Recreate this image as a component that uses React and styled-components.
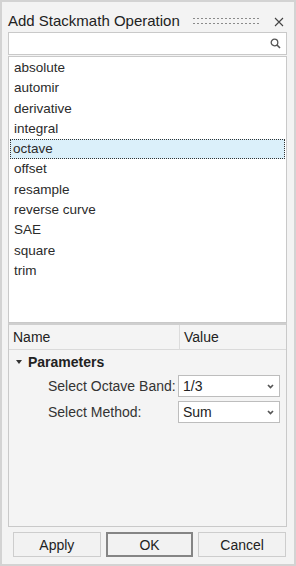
import React from "react";
import styled, { createGlobalStyle } from "styled-components";

const GlobalStyle = createGlobalStyle`
  html, body {
    margin: 0;
    padding: 0;
    background: #f3f3f3;
  }
  * {
    box-sizing: border-box;
  }
`;

const operations = [
  "absolute",
  "automir",
  "derivative",
  "integral",
  "octave",
  "offset",
  "resample",
  "reverse curve",
  "SAE",
  "square",
  "trim",
];

const params = [
  { label: "Select Octave Band:", value: "1/3" },
  { label: "Select Method:", value: "Sum" },
];

const SearchIcon = () => (
  <svg width="11" height="11" viewBox="0 0 11 11">
    <circle cx="4.5" cy="4.5" r="3.3" fill="none" stroke="#555" strokeWidth="1.3" />
    <line x1="7" y1="7" x2="10" y2="10" stroke="#555" strokeWidth="1.6" />
  </svg>
);

const CloseIcon = () => (
  <svg width="10" height="10" viewBox="0 0 10 10">
    <path d="M1 1 L9 9 M9 1 L1 9" stroke="#444" strokeWidth="1.1" />
  </svg>
);

const Chevron = () => (
  <svg width="7" height="5" viewBox="0 0 7 5">
    <path d="M1 1 L3.5 3.5 L6 1" fill="none" stroke="#555" strokeWidth="1.7" />
  </svg>
);

const Caret = () => (
  <svg width="6" height="4" viewBox="0 0 6 4">
    <path d="M0 0 L6 0 L3 4 Z" fill="#333" />
  </svg>
);

const App = () => {
  const selected = "octave";
  return (
    <>
      <GlobalStyle />
      <Window>
        <TitleBar>
          <Title>Add Stackmath Operation</Title>
          <Grip />
          <CloseButton>
            <CloseIcon />
          </CloseButton>
        </TitleBar>

        <SearchBox>
          <SearchIcon />
        </SearchBox>

        <OpList>
          {operations.map((op) => (
            <OpItem key={op} $active={op === selected}>
              {op}
            </OpItem>
          ))}
        </OpList>

        <Tree>
          <TreeHeader>
            <HeadCell>Name</HeadCell>
            <HeadCell $divider>Value</HeadCell>
          </TreeHeader>
          <GroupRow>
            <Caret />
            <span>Parameters</span>
          </GroupRow>
          {params.map((p) => (
            <ParamRow key={p.label}>
              <ParamLabel>{p.label}</ParamLabel>
              <Select>
                <span>{p.value}</span>
                <Chevron />
              </Select>
            </ParamRow>
          ))}
        </Tree>

        <Buttons>
          <Button>Apply</Button>
          <Button $default>OK</Button>
          <Button>Cancel</Button>
        </Buttons>
      </Window>
    </>
  );
};

const Window = styled.div`
  width: 296px;
  height: 566px;
  border: 2px solid #d3d3d3;
  background: #f3f3f3;
  padding: 0 7px 0 6px;
  display: flex;
  flex-direction: column;
  font-family: "Liberation Sans", Arial, sans-serif;
  color: #2b2b2b;
`;

const TitleBar = styled.div`
  height: 30px;
  padding-top: 9px;
  display: flex;
  align-items: flex-start;
`;

const Title = styled.div`
  font-size: 15px;
  line-height: 20px;
  color: #222;
  white-space: nowrap;
`;

const Grip = styled.div`
  width: 66px;
  height: 9px;
  margin: 6px 0 0 13px;
  background-image: radial-gradient(circle, #8a8a8a 0.75px, transparent 1.1px);
  background-size: 4px 5px;
  background-position: -1px -1px;
`;

const CloseButton = styled.div`
  margin: 6px 0 0 auto;
  padding-right: 3px;
  display: flex;
`;

const SearchBox = styled.div`
  height: 23px;
  margin-bottom: 1px;
  border: 1px solid #c9c9c9;
  background: #fff;
  display: flex;
  align-items: center;
  justify-content: flex-end;
  padding-right: 5px;
`;

const OpList = styled.div`
  height: 267px;
  border: 1px solid #c9c9c9;
  background: #fff;
  padding: 1px 1px 0 1px;
`;

const OpItem = styled.div`
  height: 20.3px;
  line-height: 18.3px;
  font-size: 13.5px;
  padding-left: ${({ $active }) => ($active ? "2px" : "3px")};
  background: ${({ $active }) => ($active ? "#dbf0fa" : "transparent")};
  border: ${({ $active }) => ($active ? "1px dotted #333" : "1px solid transparent")};
`;

const Tree = styled.div`
  height: 204px;
  border: 1px solid #c9c9c9;
  border-top: 2px solid #cfcfcf;
  background: #f4f4f4;
`;

const TreeHeader = styled.div`
  height: 25px;
  display: grid;
  grid-template-columns: 170px 1fr;
  border-bottom: 1px solid #dadada;
`;

const HeadCell = styled.div`
  font-size: 14px;
  line-height: 25px;
  padding-left: 4px;
  color: #222;
  border-left: ${({ $divider }) => ($divider ? "1px solid #dcdcdc" : "none")};
`;

const GroupRow = styled.div`
  height: 23px;
  display: flex;
  align-items: center;
  gap: 6px;
  padding-left: 7px;
  font-size: 14px;
  font-weight: bold;
  color: #222;
`;

const ParamRow = styled.div`
  height: 26px;
  display: grid;
  grid-template-columns: 169px 102px;
  align-items: center;
`;

const ParamLabel = styled.div`
  font-size: 14px;
  padding-left: 39px;
  color: #333;
  white-space: nowrap;
`;

const Select = styled.div`
  height: 22px;
  border: 1px solid #bdbdbd;
  background: #fff;
  display: flex;
  align-items: center;
  justify-content: space-between;
  padding: 0 5px 0 4px;
  font-size: 14px;
  color: #222;
`;

const Buttons = styled.div`
  margin-top: 5px;
  height: 25px;
  padding: 0 1px 0 5px;
  display: grid;
  grid-template-columns: 1fr 1fr 1fr;
  gap: 5px;
`;

const Button = styled.div`
  display: flex;
  align-items: center;
  justify-content: center;
  font-size: 14px;
  color: #222;
  background: #f2f2f2;
  border: ${({ $default }) => ($default ? "2px solid #858585" : "1px solid #cdcdcd")};
`;

export default App;
